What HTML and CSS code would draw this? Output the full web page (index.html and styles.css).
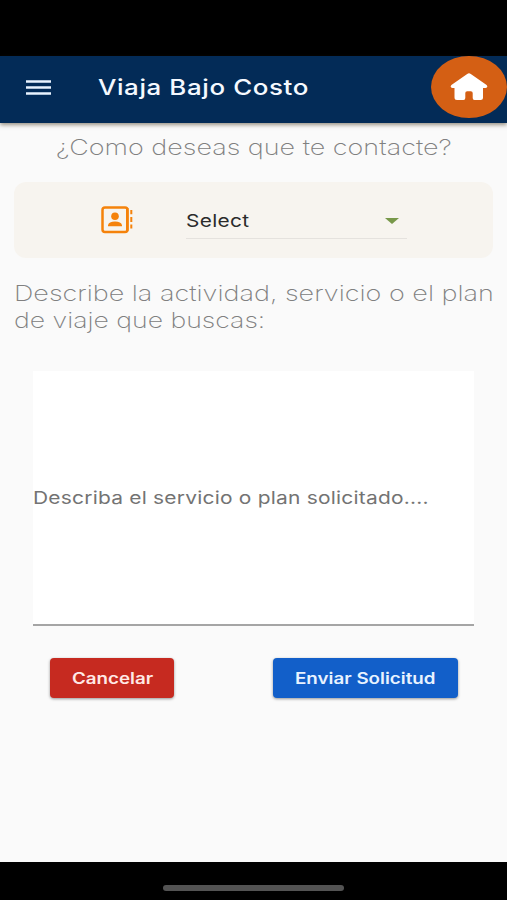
FILE: index.html
```html
<!DOCTYPE html>
<html lang="es">
<head>
<meta charset="utf-8">
<title>Viaja Bajo Costo</title>
<link rel="stylesheet" href="styles.css">
</head>
<body>
<div class="status-bar"></div>
<header class="app-bar">
  <svg class="menu-icon" viewBox="0 0 25 15"><path d="M0 1.500h25M0 7.500h25M0 13.500h25" stroke="#e9f3ff" stroke-width="2.300"/></svg>
  <h1 class="title"><span class="wide wide-title">Viaja Bajo Costo</span></h1>
  <button class="home" aria-label="Inicio">
    <svg viewBox="0 0 38 28"><path d="M17.2.9Q19-.6 20.800.9L36.600 12Q38.500 14.800 35.500 15H33V24.500Q33 27 30.500 27H24.500Q22.700 27 22.700 25V20Q22.700 18.300 20.800 18.300H17.200Q15.300 18.300 15.300 20V25Q15.300 27 13.500 27H7Q4.500 27 4.500 24.500V15H2.500Q-.5 14.800 1.400 12Z" fill="#fff"/></svg>
  </button>
</header>
<main class="content">
  <p class="question"><span class="wide wide-question">¿Como deseas que te contacte?</span></p>
  <section class="contact-card">
    <svg class="contact-icon" viewBox="0 0 32 28">
      <rect x="1.500" y="1.400" width="25" height="24.500" rx="2.500" fill="none" stroke="#f5820b" stroke-width="2.500"/>
      <circle cx="14" cy="10.300" r="3.800" fill="#f5820b"/>
      <path d="M7 20.300v-1Q7.800 15.600 14 15.600T21 19.300v1zM25 2h2.500v23H25zM29.300 4h2v4.300h-2zM29.300 11h2v5h-2zM29.300 18.500h2v4h-2z" fill="#f5820b"/>
    </svg>
    <div class="select"><span class="wide wide-select">Select</span><svg class="arrow" viewBox="0 0 14 6"><path d="M0 0h14L7 6z" fill="#78984a"/></svg></div>
  </section>
  <p class="prompt"><span class="wide wide-line1">Describe la actividad, servicio o el plan</span><span class="wide wide-line2">de viaje que buscas:</span></p>
  <div class="field"><span class="wide wide-hint">Describa el servicio o plan solicitado....</span></div>
  <div class="actions">
    <button class="btn cancel"><span class="wide wide-cancel">Cancelar</span></button>
    <button class="btn send"><span class="wide wide-send">Enviar Solicitud</span></button>
  </div>
</main>
<footer class="nav-bar"><div class="handle"></div></footer>
</body>
</html>
```
FILE: styles.css
```css
* { box-sizing: border-box; }
body {
  margin: 0;
  width: 507px;
  height: 900px;
  display: flex;
  flex-direction: column;
  overflow: hidden;
  background: #fafafa;
  font-family: Inter, "Liberation Sans", sans-serif;
}
h1, p { margin: 0; }
button { border: 0; padding: 0; font-family: inherit; }
svg { display: block; }

/* Extended letterforms: each label is stretched from its left edge */
.wide {
  display: block;
  width: max-content;
  white-space: nowrap;
  transform-origin: left center;
}
.wide-title { transform: scaleX(1.205); letter-spacing: .5px; }
.wide-question { transform: scaleX(1.225); }
.wide-select { transform: scaleX(1.19); letter-spacing: .3px; }
.wide-line1 { transform: scaleX(1.227); }
.wide-line2 { transform: scaleX(1.21); }
.wide-hint { transform: scaleX(1.197); letter-spacing: .18px; }
.wide-cancel, .wide-send { transform: scaleX(1.21); }

.status-bar { height: 56px; flex: none; background: #000; }
.app-bar {
  height: 67px;
  flex: none;
  display: flex;
  align-items: center;
  padding-left: 26px;
  background: #032b57;
  box-shadow: 0 2px 4px rgba(60, 45, 20, .5);
}
.menu-icon { width: 25px; height: 15px; margin-top: -4px; }
.title {
  flex: 1;
  margin: -5px 0 0 47px;
  font-size: 21.500px;
  line-height: 28px;
  font-weight: 550;
  color: #f5f9ff;
}
.home {
  width: 76px;
  height: 62px;
  align-self: flex-start;
  display: grid;
  place-items: center;
  border-radius: 50%;
  background: #d45f14;
}
.home svg { width: 38px; height: 28px; }

.content { flex: 1; display: flex; flex-direction: column; padding: 11px 14px 0; }
.question {
  padding-left: 42px;
  font-size: 22px;
  line-height: 27px;
  font-weight: 200;
  color: #808080;
}
.contact-card {
  height: 76px;
  margin-top: 21px;
  padding-left: 87px;
  display: flex;
  align-items: flex-start;
  border-radius: 12px;
  background: #f7f4ef;
}
.contact-icon { width: 32px; height: 28px; margin-top: 24px; }
.select {
  width: 221px;
  height: 31px;
  margin: 26px 0 0 53px;
  display: flex;
  justify-content: space-between;
  border-bottom: 1px solid #e5e2de;
  font-size: 17.500px;
  line-height: 26px;
  color: #2b2b2b;
}
.arrow { width: 14px; height: 6px; margin: 10px 8px 0 0; }
.prompt {
  margin-top: 22px;
  font-size: 22px;
  line-height: 26.500px;
  font-weight: 200;
  color: #808080;
}
.field {
  width: 441px;
  height: 255px;
  margin: 38px 0 0 19px;
  display: flex;
  align-items: center;
  background: #fff;
  border-bottom: 2px solid #a5a5a5;
  font-size: 17.500px;
  color: #737373;
}
.actions {
  display: flex;
  justify-content: space-between;
  margin-top: 32px;
  padding: 0 35px 0 36px;
}
.btn {
  height: 40px;
  padding-left: 22px;
  border-radius: 4px;
  box-shadow: 0 1px 3px rgba(0, 0, 0, .4);
  font-size: 15.500px;
  font-weight: 600;
}
.cancel { width: 124px; background: #c62a20; color: #ffe9e6; }
.send { width: 185px; background: #125fc9; color: #e8f3ff; }

.nav-bar {
  height: 38px;
  flex: none;
  display: flex;
  justify-content: center;
  align-items: flex-start;
  padding-top: 23px;
  background: #000;
}
.handle { width: 181px; height: 6px; border-radius: 3px; background: #535353; }
```
